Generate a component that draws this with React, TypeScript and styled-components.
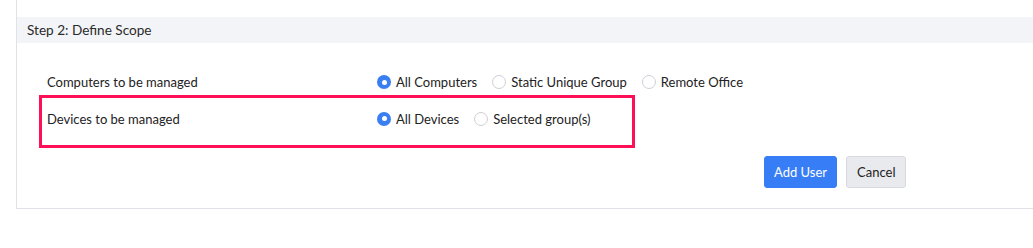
import React, { useState } from "react";
import styled, { createGlobalStyle, css } from "styled-components";

const GlobalStyle = createGlobalStyle`
  html, body {
    margin: 0;
    padding: 0;
    background: #ffffff;
  }
  body {
    font-family: Lato, "Noto Sans", sans-serif;
    font-size: 13px;
    color: #222222;
  }
`;

const Panel = styled.div`
  margin-left: 16px;
  height: 209px;
  box-sizing: border-box;
  border-left: 1px solid #e1e2e8;
  border-bottom: 1px solid #e1e2e8;
  padding-top: 17px;
`;

const SectionHeader = styled.div`
  height: 26px;
  display: flex;
  align-items: center;
  padding-left: 10px;
  background: #f3f4f7;
  font-size: 13.6px;
  color: #2a2a2a;
`;

const Rows = styled.div`
  margin-top: 26px;
  padding-left: 22px;
  display: flex;
  flex-direction: column;
`;

const Row = styled.div<{ highlight?: boolean }>`
  width: 596px;
  box-sizing: border-box;
  display: flex;
  align-items: center;
  height: 26px;
  padding-left: 8px;
  ${(props) =>
    props.highlight &&
    css`
      height: 53px;
      align-items: flex-start;
      padding: 0 0 6px 5px;
      border: 3px solid #ff0f55;
      & > * {
        height: 41px;
      }
    `};
`;

const Label = styled.div`
  width: 330px;
  flex-shrink: 0;
  display: flex;
  align-items: center;
`;

const Options = styled.div`
  display: flex;
  align-items: center;
`;

const Option = styled.label`
  display: flex;
  align-items: center;
  gap: 5px;
  margin-right: 15px;
  cursor: pointer;
  white-space: nowrap;
`;

const RadioDot = styled.span<{ checked: boolean }>`
  width: 14px;
  height: 14px;
  box-sizing: border-box;
  border-radius: 50%;
  display: inline-flex;
  align-items: center;
  justify-content: center;
  border: 1px solid #cfd0d6;
  background: #ffffff;
  ${(props) =>
    props.checked &&
    css`
      border: none;
      background: #3a7ff2;
      &::after {
        content: "";
        width: 5px;
        height: 5px;
        border-radius: 50%;
        background: #ffffff;
      }
    `};
`;

const Actions = styled.div`
  display: flex;
  gap: 9px;
  margin-top: 8px;
  padding-left: 747px;
`;

const Button = styled.button<{ primary?: boolean }>`
  height: 32px;
  box-sizing: border-box;
  font-family: Lato, "Noto Sans", sans-serif;
  font-size: 13px;
  border-radius: 3px;
  cursor: pointer;
  padding: 0 10px;
  border: 1px solid #d8d9de;
  background: #e9eaee;
  color: #222222;
  ${(props) =>
    props.primary &&
    css`
      padding: 0 9px;
      border: 1px solid #377df5;
      background: #377df5;
      color: #ffffff;
    `};
`;

const RadioGroup = (props: {
  options: string[];
  value: string;
  onChange: (v: string) => void;
}) => {
  return (
    <Options>
      {props.options.map((opt) => (
        <Option key={opt} onClick={() => props.onChange(opt)}>
          <RadioDot checked={props.value === opt} />
          {opt}
        </Option>
      ))}
    </Options>
  );
};

export default function App() {
  const [computers, setComputers] = useState("All Computers");
  const [devices, setDevices] = useState("All Devices");

  return (
    <>
      <GlobalStyle />
      <Panel>
        <SectionHeader>Step 2: Define Scope</SectionHeader>
        <Rows>
          <Row>
            <Label>Computers to be managed</Label>
            <RadioGroup
              options={["All Computers", "Static Unique Group", "Remote Office"]}
              value={computers}
              onChange={setComputers}
            />
          </Row>
          <Row highlight>
            <Label>Devices to be managed</Label>
            <RadioGroup
              options={["All Devices", "Selected group(s)"]}
              value={devices}
              onChange={setDevices}
            />
          </Row>
        </Rows>
        <Actions>
          <Button primary>Add User</Button>
          <Button>Cancel</Button>
        </Actions>
      </Panel>
    </>
  );
}
